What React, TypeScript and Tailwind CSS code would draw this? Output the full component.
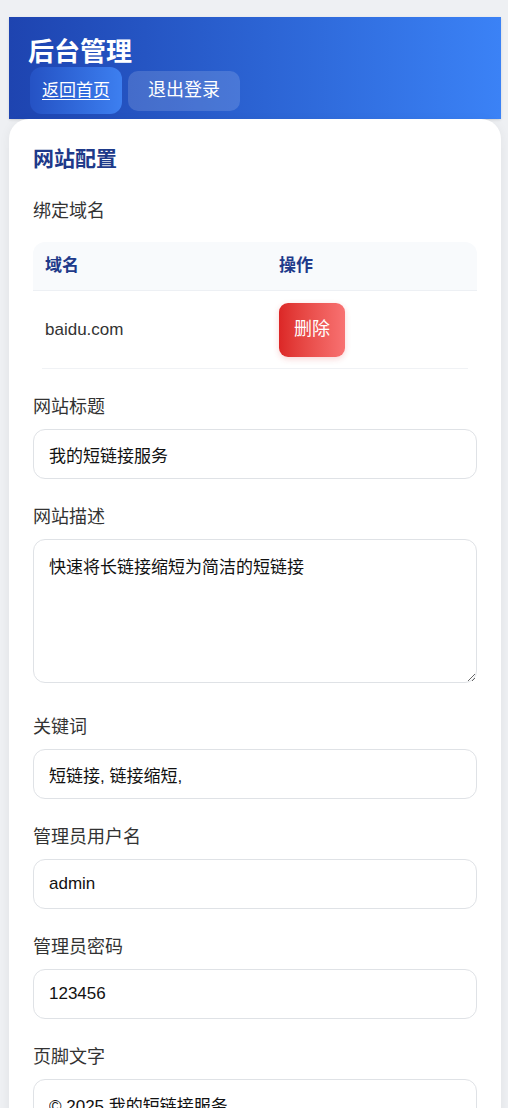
import { useState } from 'react';

const font = { fontFamily: '"Liberation Sans", "Noto Sans CJK SC", sans-serif' };

function Field({
  label,
  value,
  onChange,
}: {
  label: string;
  value: string;
  onChange: (v: string) => void;
}) {
  return (
    <div className="mb-[26px]">
      <label className="block text-[18px] leading-[24px] text-[#333] mb-[10px]">{label}</label>
      <input
        type="text"
        value={value}
        onChange={(e) => onChange(e.target.value)}
        className="block w-full h-[50px] px-[15px] text-[17px] text-[#111] bg-white border border-[#dfe2e6] rounded-[12px] outline-none"
      />
    </div>
  );
}

export default function App() {
  const [title, setTitle] = useState('我的短链接服务');
  const [desc, setDesc] = useState('快速将长链接缩短为简洁的短链接');
  const [keywords, setKeywords] = useState('短链接, 链接缩短,');
  const [user, setUser] = useState('admin');
  const [pass, setPass] = useState('123456');
  const [footer, setFooter] = useState('© 2025 我的短链接服务');
  const [domains, setDomains] = useState(['baidu.com']);

  return (
    <div className="min-h-screen bg-[#eef0f3] pl-[9px] pr-[7px] pt-[17px]" style={font}>
      <header className="bg-gradient-to-r from-[#1e44b0] to-[#3b82f6] px-[19px] pt-[20px] pb-[5px] shadow-sm">
        <h1 className="text-[26px] leading-[30px] font-bold text-white">后台管理</h1>
        <div className="flex items-center gap-[6px] ml-[2px]">
          <a
            href="#"
            className="flex items-center h-[47px] px-[12px] rounded-[12px] bg-gradient-to-r from-[#2552c4] to-[#3d7ff0] text-[17px] text-white underline underline-offset-[3px]"
          >
            返回首页
          </a>
          <button className="h-[40px] w-[112px] rounded-[10px] bg-white/15 text-[18px] text-white">
            退出登录
          </button>
        </div>
      </header>

      <main className="bg-white rounded-t-[20px] px-[24px] pt-[24px] pb-10 shadow-[0_2px_12px_rgba(0,0,0,0.06)]">
        <h2 className="text-[21px] leading-[32px] font-bold text-[#1e3a8a] mb-[24px]">网站配置</h2>

        <div className="text-[18px] leading-[24px] text-[#333] mb-[19px]">绑定域名</div>
        <div className="mb-[26px]">
          <div className="grid grid-cols-[234px_1fr] h-[49px] items-center bg-[#f8fafc] rounded-t-[12px] border-b border-[#edf0f4] text-[17px] font-bold text-[#1e3a8a]">
            <div className="pl-[12px]">域名</div>
            <div className="pl-[12px]">操作</div>
          </div>
          {domains.map((d) => (
            <div key={d} className="mx-[9px] grid grid-cols-[225px_1fr] h-[78px] items-center border-b border-[#f0f2f5]">
              <div className="pl-[3px] text-[17px] text-[#333]">{d}</div>
              <div className="pl-[12px]">
                <button
                  onClick={() => setDomains(domains.filter((x) => x !== d))}
                  className="h-[54px] px-[15px] rounded-[9px] bg-gradient-to-r from-[#dc2626] to-[#f87171] text-[18px] text-white shadow-[0_2px_6px_rgba(220,38,38,0.2)]"
                >
                  删除
                </button>
              </div>
            </div>
          ))}
        </div>

        <Field label="网站标题" value={title} onChange={setTitle} />

        <div className="mb-[32px]">
          <label className="block text-[18px] leading-[24px] text-[#333] mb-[10px]">网站描述</label>
          <textarea
            value={desc}
            onChange={(e) => setDesc(e.target.value)}
            className="block w-full h-[144px] px-[15px] py-[14px] text-[17px] leading-[27px] text-[#111] bg-white border border-[#dfe2e6] rounded-[12px] outline-none"
          />
        </div>

        <Field label="关键词" value={keywords} onChange={setKeywords} />
        <Field label="管理员用户名" value={user} onChange={setUser} />
        <Field label="管理员密码" value={pass} onChange={setPass} />
        <Field label="页脚文字" value={footer} onChange={setFooter} />
      </main>
    </div>
  );
}
